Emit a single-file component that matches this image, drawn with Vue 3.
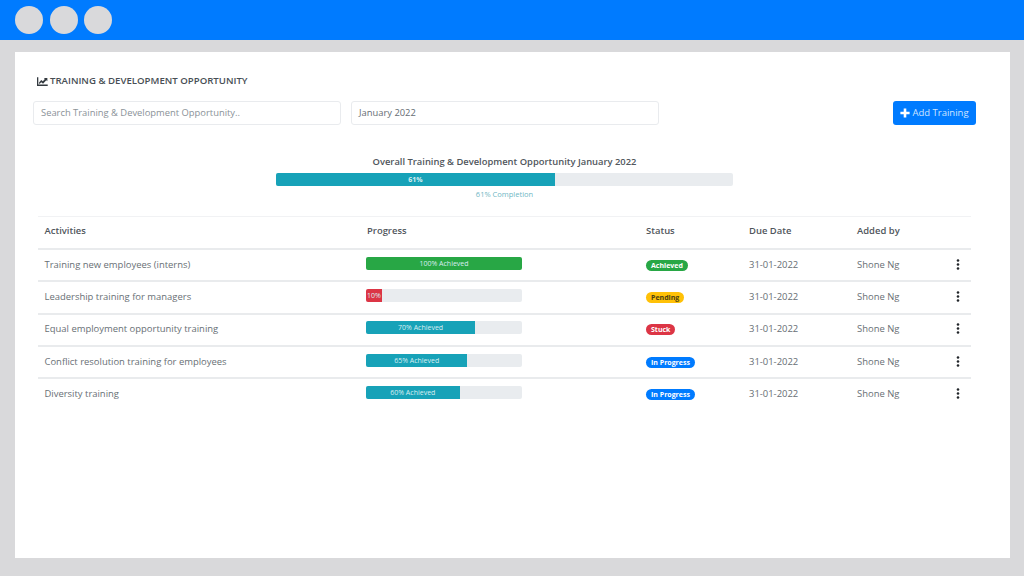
<script setup>
const rows = [
  { name: 'Training new employees (interns)', pct: 100, label: '100% Achieved', bar: 'green', status: 'Achieved', badge: 'green' },
  { name: 'Leadership training for managers', pct: 10, label: '10%', bar: 'red', status: 'Pending', badge: 'yellow' },
  { name: 'Equal employment opportunity training', pct: 70, label: '70% Achieved', bar: 'teal', status: 'Stuck', badge: 'red' },
  { name: 'Conflict resolution training for employees', pct: 65, label: '65% Achieved', bar: 'teal', status: 'In Progress', badge: 'blue' },
  { name: 'Diversity training', pct: 60, label: '60% Achieved', bar: 'teal', status: 'In Progress', badge: 'blue' }
]
</script>

<template>
  <div class="page">
    <header class="topbar">
      <span class="dot"></span>
      <span class="dot"></span>
      <span class="dot"></span>
    </header>

    <main class="card">
      <h1 class="title">
        <svg class="chart-icon" viewBox="0 0 12 10" width="11" height="9">
          <path d="M0.6 0.3V9.2H11.8" fill="none" stroke="#343a40" stroke-width="1.5" />
          <path d="M2.2 6.2L4.6 3.4L6.4 4.8L8.6 2.2L7.6 1H11.4V4.6L10.2 3.5L6.6 7.4L4.6 5.8L3 7.6H2.2Z" fill="#343a40" />
        </svg>
        TRAINING &amp; DEVELOPMENT OPPORTUNITY
      </h1>

      <div class="toolbar">
        <div class="field placeholder">Search Training &amp; Development Opportunity..</div>
        <div class="field">January 2022</div>
        <button class="add-btn">
          <svg viewBox="0 0 10 10" width="10" height="10">
            <path d="M3.7 0.4H6.3V3.7H9.6V6.3H6.3V9.6H3.7V6.3H0.4V3.7H3.7Z" fill="#fff" />
          </svg>
          Add Training
        </button>
      </div>

      <section class="overall">
        <div class="overall-title">Overall Training &amp; Development Opportunity January 2022</div>
        <div class="track overall-track">
          <div class="fill teal" :style="{ width: '61%' }">61%</div>
        </div>
        <div class="overall-note">61% Completion</div>
      </section>

      <div class="table">
        <div class="row head">
          <div class="first">Activities</div>
          <div>Progress</div>
          <div>Status</div>
          <div>Due Date</div>
          <div>Added by</div>
          <div></div>
        </div>
        <div v-for="row in rows" :key="row.name" class="row">
          <div class="first">{{ row.name }}</div>
          <div class="progress-cell">
            <div class="track">
              <div class="fill" :class="row.bar" :style="{ width: row.pct + '%' }">{{ row.label }}</div>
            </div>
          </div>
          <div><span class="badge" :class="row.badge">{{ row.status }}</span></div>
          <div>31-01-2022</div>
          <div>Shone Ng</div>
          <div class="more">
            <svg viewBox="0 0 4 12" width="4" height="11">
              <circle cx="2" cy="1.6" r="1.4" fill="#212529" />
              <circle cx="2" cy="6" r="1.4" fill="#212529" />
              <circle cx="2" cy="10.4" r="1.4" fill="#212529" />
            </svg>
          </div>
        </div>
      </div>
    </main>
  </div>
</template>

<style>
body {
  margin: 0;
}
</style>

<style scoped>
.page {
  width: 1024px;
  height: 576px;
  overflow: hidden;
  background: #d9d9db;
  font-family: "Open Sans", "Noto Sans", sans-serif;
  color: #5f666c;
  display: flex;
  flex-direction: column;
}

.topbar {
  height: 40px;
  flex: none;
  background: #007bff;
  box-sizing: border-box;
  padding: 6px 15px;
  display: flex;
  gap: 6.5px;
}

.dot {
  width: 28px;
  height: 28px;
  border-radius: 50%;
  background: #d9d9db;
}

.card {
  margin: 12px 14px 18px 15px;
  flex: 1;
  background: #fff;
  box-sizing: border-box;
  padding: 22px 34px 0 18px;
}

.title {
  margin: 0 0 0 4px;
  height: 14px;
  font-size: 9.65px;
  line-height: 14px;
  font-weight: 600;
  color: #484e54;
  display: flex;
  align-items: center;
  gap: 2px;
}

.toolbar {
  margin-top: 13px;
  display: flex;
}

.field {
  width: 308px;
  height: 24px;
  box-sizing: border-box;
  border: 1px solid #e9ebee;
  border-radius: 3px;
  padding: 0 7px;
  margin-right: 10px;
  font-size: 9.4px;
  line-height: 22px;
  color: #666d74;
}

.placeholder {
  color: #8b9298;
}

.add-btn {
  margin-left: auto;
  width: 83px;
  height: 24px;
  padding: 0 0 1px;
  border: 0;
  border-radius: 3px;
  background: #007bff;
  color: #cfe4ff;
  font-family: inherit;
  font-size: 9.5px;
  display: flex;
  align-items: center;
  justify-content: center;
  gap: 2px;
}

.overall {
  margin-top: 30px;
  margin-left: 243px;
  width: 457px;
  text-align: center;
}

.overall-title {
  font-size: 9.4px;
  line-height: 14px;
  font-weight: 600;
  color: #50565c;
}

.overall-note {
  margin-top: 2px;
  font-size: 7.5px;
  line-height: 12px;
  color: #6fb7c4;
}

.table {
  margin: 16px 0 0 5px;
  width: 933px;
  border-top: 1px solid #f1f2f4;
}

.row {
  display: grid;
  grid-template-columns: 323px 279px 103px 108px 94px 20px;
  height: 32.3px;
  box-sizing: border-box;
  padding-bottom: 2px;
  align-items: center;
  border-top: 2px solid #e9ebed;
  font-size: 9.45px;
  color: #686f75;
}

.row > div {
  padding-left: 6px;
}

.row > .first {
  padding-left: 6.5px;
}

.row.head {
  border-top: 0;
  height: 31px;
  padding-bottom: 5px;
  font-weight: 600;
  color: #50565c;
}

.row > .progress-cell {
  padding-left: 5px;
}

.track {
  width: 156px;
  height: 13px;
  border-radius: 2px;
  background: #e9ecef;
  overflow: hidden;
  margin-top: -2px;
}

.overall .overall-track {
  width: 457px;
  margin-top: 4px;
  text-align: left;
}

.fill {
  height: 100%;
  color: #d9eef2;
  font-size: 7px;
  line-height: 13px;
  text-align: center;
  white-space: nowrap;
}

.overall-track .fill {
  font-weight: 700;
}

.fill.green {
  background: #28a745;
}

.fill.red {
  background: #dc3545;
}

.fill.teal {
  background: #17a2b8;
}

.badge {
  display: inline-block;
  padding: 0 5px;
  border-radius: 6px;
  font-size: 7px;
  line-height: 11px;
  font-weight: 700;
  color: #fff;
  vertical-align: middle;
}

.badge.green {
  background: #28a745;
}

.badge.yellow {
  background: #ffc107;
  color: #4a3f12;
}

.badge.red {
  background: #dc3545;
}

.badge.blue {
  background: #007bff;
}

.more {
  display: flex;
  justify-content: center;
  align-items: center;
}
</style>
